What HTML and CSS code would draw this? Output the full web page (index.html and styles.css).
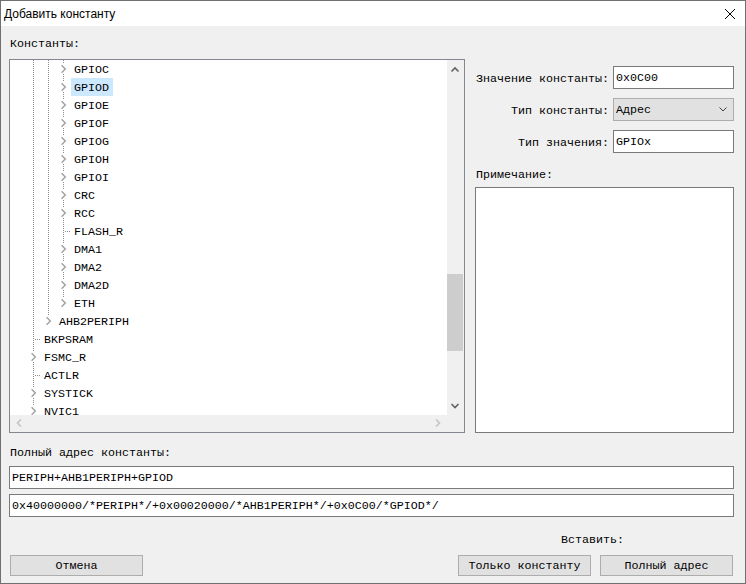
FILE: index.html
```html
<!DOCTYPE html>
<html lang="ru">
<head>
<meta charset="utf-8">
<title>Добавить константу</title>
<link rel="stylesheet" href="styles.css">
</head>
<body>
<div class="window">
  <div class="titlebar">
    <span class="title">Добавить константу</span>
    <svg class="close" width="10" height="10" viewBox="0 0 10 10"><path d="M0 0 L10 10 M10 0 L0 10" stroke="#000" stroke-width="1" fill="none"/></svg>
  </div>
  <div class="content">
    <div class="main">
      <div class="left">
        <div class="label">Константы:</div>
        <div class="treebox">
          <div class="tree-area">
            <div class="tree">
              <div class="row"><svg class="cell"><use href="#g"/></svg><svg class="cell"><use href="#g"/></svg><svg class="cell"><use href="#exp"/></svg><span class="txt">GPIOC</span></div>
              <div class="row"><svg class="cell"><use href="#g"/></svg><svg class="cell"><use href="#g"/></svg><svg class="cell"><use href="#exp"/></svg><span class="txt sel">GPIOD</span></div>
              <div class="row"><svg class="cell"><use href="#g"/></svg><svg class="cell"><use href="#g"/></svg><svg class="cell"><use href="#exp"/></svg><span class="txt">GPIOE</span></div>
              <div class="row"><svg class="cell"><use href="#g"/></svg><svg class="cell"><use href="#g"/></svg><svg class="cell"><use href="#exp"/></svg><span class="txt">GPIOF</span></div>
              <div class="row"><svg class="cell"><use href="#g"/></svg><svg class="cell"><use href="#g"/></svg><svg class="cell"><use href="#exp"/></svg><span class="txt">GPIOG</span></div>
              <div class="row"><svg class="cell"><use href="#g"/></svg><svg class="cell"><use href="#g"/></svg><svg class="cell"><use href="#exp"/></svg><span class="txt">GPIOH</span></div>
              <div class="row"><svg class="cell"><use href="#g"/></svg><svg class="cell"><use href="#g"/></svg><svg class="cell"><use href="#exp"/></svg><span class="txt">GPIOI</span></div>
              <div class="row"><svg class="cell"><use href="#g"/></svg><svg class="cell"><use href="#g"/></svg><svg class="cell"><use href="#exp"/></svg><span class="txt">CRC</span></div>
              <div class="row"><svg class="cell"><use href="#g"/></svg><svg class="cell"><use href="#g"/></svg><svg class="cell"><use href="#exp"/></svg><span class="txt">RCC</span></div>
              <div class="row"><svg class="cell"><use href="#g"/></svg><svg class="cell"><use href="#g"/></svg><svg class="cell"><use href="#leaf"/></svg><span class="txt">FLASH_R</span></div>
              <div class="row"><svg class="cell"><use href="#g"/></svg><svg class="cell"><use href="#g"/></svg><svg class="cell"><use href="#exp"/></svg><span class="txt">DMA1</span></div>
              <div class="row"><svg class="cell"><use href="#g"/></svg><svg class="cell"><use href="#g"/></svg><svg class="cell"><use href="#exp"/></svg><span class="txt">DMA2</span></div>
              <div class="row"><svg class="cell"><use href="#g"/></svg><svg class="cell"><use href="#g"/></svg><svg class="cell"><use href="#exp"/></svg><span class="txt">DMA2D</span></div>
              <div class="row"><svg class="cell"><use href="#g"/></svg><svg class="cell"><use href="#g"/></svg><svg class="cell"><use href="#exph"/></svg><span class="txt">ETH</span></div>
              <div class="row"><svg class="cell"><use href="#g"/></svg><svg class="cell"><use href="#exph"/></svg><span class="txt">AHB2PERIPH</span></div>
              <div class="row"><svg class="cell"><use href="#leaf"/></svg><span class="txt">BKPSRAM</span></div>
              <div class="row"><svg class="cell"><use href="#exp"/></svg><span class="txt">FSMC_R</span></div>
              <div class="row"><svg class="cell"><use href="#leaf"/></svg><span class="txt">ACTLR</span></div>
              <div class="row"><svg class="cell"><use href="#exp"/></svg><span class="txt">SYSTICK</span></div>
              <div class="row"><svg class="cell"><use href="#exp"/></svg><span class="txt">NVIC1</span></div>
            </div>
            <div class="vscroll">
              <svg class="sbtn" viewBox="0 0 17 17"><path d="M4.5 11.5 L8 8 L11.5 11.5" fill="none" stroke="#606060" stroke-width="1.6"/></svg>
              <div class="track"><div class="thumb"></div></div>
              <svg class="sbtn" viewBox="0 0 17 17"><path d="M4.5 6 L8 9.5 L11.5 6" fill="none" stroke="#606060" stroke-width="1.6"/></svg>
            </div>
          </div>
          <div class="hscroll-row">
            <div class="hscroll">
              <svg class="sbtn" viewBox="0 0 17 17"><path d="M11 4.5 L7.5 8 L11 11.5" fill="none" stroke="#c4c4c4" stroke-width="1.6"/></svg>
              <svg class="sbtn" viewBox="0 0 17 17"><path d="M6 4.5 L9.5 8 L6 11.5" fill="none" stroke="#c4c4c4" stroke-width="1.6"/></svg>
            </div>
            <div class="corner"></div>
          </div>
        </div>
      </div>
      <div class="right">
        <div class="field"><span class="flabel">Значение константы:</span><div class="input">0x0C00</div></div>
        <div class="field"><span class="flabel">Тип константы:</span><div class="combo"><span>Адрес</span><svg width="8" height="5" viewBox="0 0 8 5"><path d="M0.5 0.5 L4 4 L7.5 0.5" fill="none" stroke="#444" stroke-width="1"/></svg></div></div>
        <div class="field"><span class="flabel">Тип значения:</span><div class="input">GPIOx</div></div>
        <div class="label note-label">Примечание:</div>
        <div class="textarea"></div>
      </div>
    </div>
    <div class="label full-label">Полный адрес константы:</div>
    <div class="input wide">PERIPH+AHB1PERIPH+GPIOD</div>
    <div class="input wide second">0x40000000/*PERIPH*/+0x00020000/*AHB1PERIPH*/+0x0C00/*GPIOD*/</div>
    <div class="insert-label">Вставить:</div>
    <div class="buttons">
      <div class="btn cancel">Отмена</div>
      <div class="spacer"></div>
      <div class="btn">Только константу</div>
      <div class="btn">Полный адрес</div>
    </div>
  </div>
</div>
<svg class="defs" width="0" height="0">
  <symbol id="g" viewBox="0 0 15 18"><line x1="7.5" y1="0" x2="7.5" y2="18" stroke="#8c8c8c" stroke-dasharray="1 1"/></symbol>
  <symbol id="exp" viewBox="0 0 15 18"><line x1="7.5" y1="0" x2="7.5" y2="18" stroke="#8c8c8c" stroke-dasharray="1 1"/><rect x="4" y="4" width="8" height="10" fill="#fff"/><path d="M5.6 5.3 L9.3 9 L5.6 12.7" fill="none" stroke="#a0a0a0" stroke-width="1.4"/></symbol>
  <symbol id="exph" viewBox="0 0 15 18"><line x1="7.5" y1="0" x2="7.5" y2="9" stroke="#8c8c8c" stroke-dasharray="1 1"/><rect x="4" y="4" width="8" height="10" fill="#fff"/><path d="M5.6 5.3 L9.3 9 L5.6 12.7" fill="none" stroke="#a0a0a0" stroke-width="1.4"/></symbol>
  <symbol id="leaf" viewBox="0 0 15 18"><line x1="7.5" y1="0" x2="7.5" y2="18" stroke="#8c8c8c" stroke-dasharray="1 1"/><line x1="9" y1="9.5" x2="15" y2="9.5" stroke="#8c8c8c" stroke-dasharray="1 1"/></symbol>
</svg>
</body>
</html>
```

FILE: styles.css
```css
html, body {
  margin: 0;
  padding: 0;
  background: #ffffff;
}

.window {
  width: 746px;
  height: 584px;
  box-sizing: border-box;
  border: 1px solid #707070;
  display: flex;
  flex-direction: column;
  font-family: "Liberation Mono", "Courier New", monospace;
  font-size: 11.67px;
  color: #000;
}

.titlebar {
  height: 25px;
  flex: none;
  background: #ffffff;
  display: flex;
  align-items: center;
  justify-content: space-between;
  padding: 0 10px 0 3px;
}

.title {
  font-family: "Liberation Sans", Arial, sans-serif;
  font-size: 12px;
  color: #000;
}

.close {
  display: block;
}

.content {
  flex: 1;
  background: #f0f0f0;
  display: flex;
  flex-direction: column;
  padding: 8px 11px 0 8px;
}

.label {
  line-height: 20px;
  height: 18px;
  padding-left: 1px;
  white-space: nowrap;
}

.main {
  display: flex;
  gap: 10px;
}

.left {
  width: 456px;
  display: flex;
  flex-direction: column;
  gap: 7px;
}

.treebox {
  height: 374px;
  box-sizing: border-box;
  border: 1px solid #828790;
  display: flex;
  flex-direction: column;
}

.tree-area {
  height: 355px;
  display: flex;
}

.tree {
  flex: 1;
  background: #ffffff;
  overflow: hidden;
}

.row {
  display: flex;
  height: 18px;
  padding-left: 16px;
  white-space: nowrap;
}

.cell {
  width: 15px;
  height: 18px;
  flex: none;
  display: block;
}

.txt {
  display: block;
  height: 18px;
  line-height: 20px;
  padding: 0 4px 0 3px;
}

.txt.sel {
  background: #cce8ff;
}

.vscroll {
  width: 17px;
  background: #f0f0f0;
  display: flex;
  flex-direction: column;
}

.sbtn {
  width: 17px;
  height: 17px;
  display: block;
  flex: none;
}

.track {
  flex: 1;
  padding-top: 197px;
}

.thumb {
  width: 16px;
  height: 77px;
  background: #cdcdcd;
}

.hscroll-row {
  height: 17px;
  display: flex;
}

.hscroll {
  flex: 1;
  background: #f0f0f0;
  display: flex;
  justify-content: space-between;
}

.corner {
  width: 17px;
  background: #f0f0f0;
}

.right {
  width: 259px;
  padding-top: 32px;
  display: flex;
  flex-direction: column;
}

.field {
  display: grid;
  grid-template-columns: 134px 121px;
  column-gap: 4px;
  height: 23px;
  margin-bottom: 9px;
  align-items: center;
}

.field:nth-child(3) {
  margin-bottom: 0;
}

.flabel {
  text-align: right;
  white-space: nowrap;
  height: 18px;
  line-height: 20px;
}

.input {
  box-sizing: border-box;
  height: 23px;
  border: 1px solid #7a7a7a;
  background: #ffffff;
  padding: 0 2px;
  line-height: 23px;
  white-space: nowrap;
  overflow: hidden;
}

.combo {
  box-sizing: border-box;
  height: 23px;
  border: 1px solid #adadad;
  background: #e1e1e1;
  padding: 0 6px 0 2px;
  display: flex;
  align-items: center;
  justify-content: space-between;
}

.combo span {
  height: 21px;
  line-height: 23px;
}

.combo svg {
  display: block;
}

.note-label {
  margin-top: 12px;
  margin-bottom: 4px;
}

.textarea {
  height: 246px;
  box-sizing: border-box;
  border: 1px solid #7a7a7a;
  background: #ffffff;
}

.full-label {
  margin-top: 10px;
}

.wide {
  margin-top: 5px;
}

.insert-label {
  margin-top: 13px;
  align-self: flex-end;
  margin-right: 110px;
  height: 18px;
  line-height: 20px;
}

.buttons {
  margin-top: 7px;
  display: flex;
  gap: 9px;
  padding: 0 1px;
}

.spacer {
  flex: 1;
}

.btn {
  width: 133px;
  height: 21px;
  box-sizing: border-box;
  border: 1px solid #adadad;
  background: #e1e1e1;
  text-align: center;
  line-height: 21px;
  white-space: nowrap;
  overflow: hidden;
}

.defs {
  display: block;
  width: 0;
  height: 0;
  overflow: hidden;
}
```
